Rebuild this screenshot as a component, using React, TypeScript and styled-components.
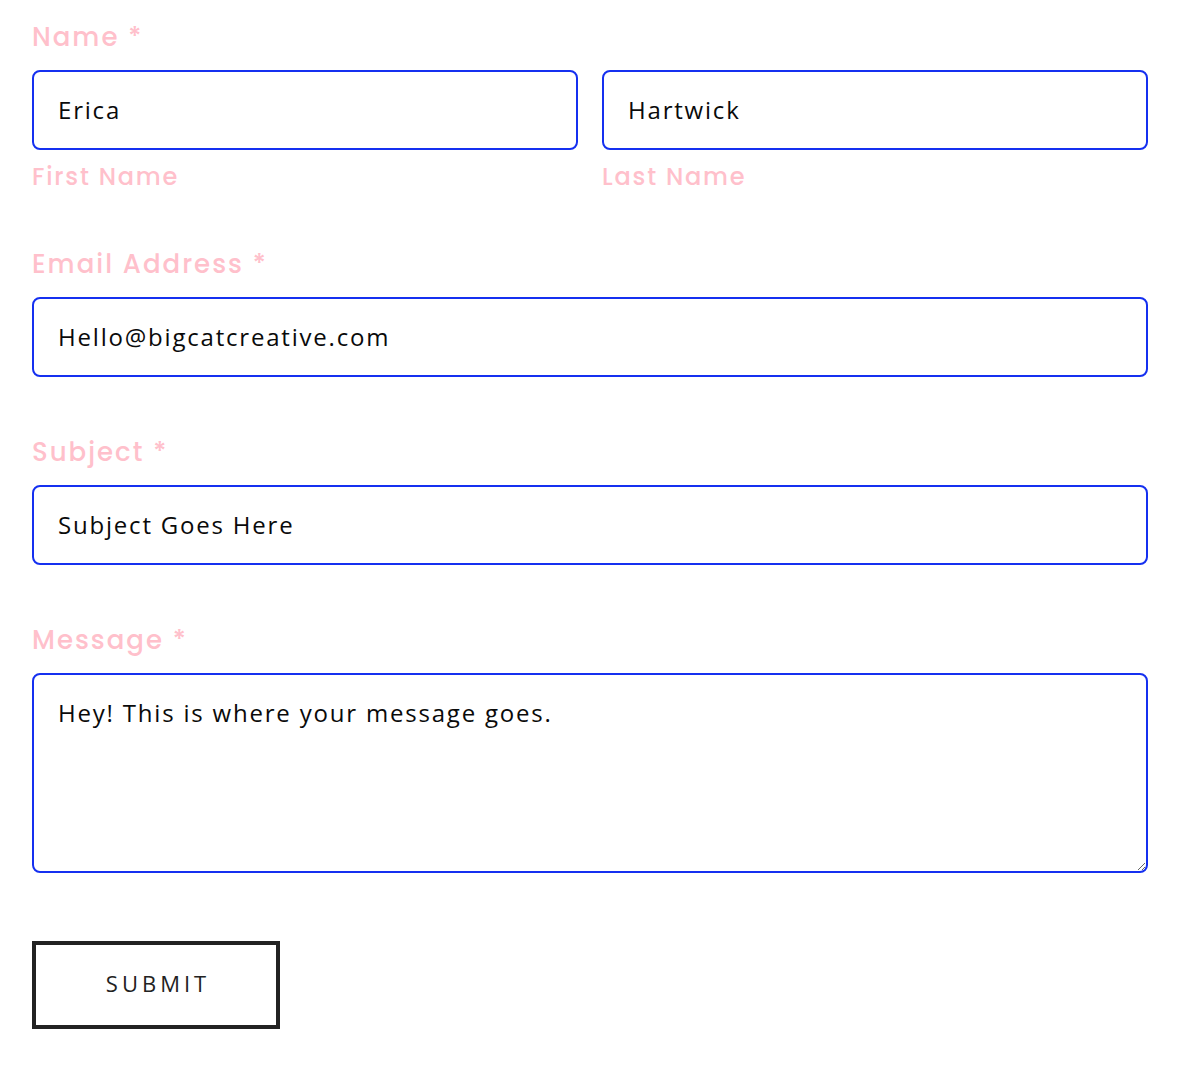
import React from "react";
import styled, { createGlobalStyle } from "styled-components";

const GlobalStyle = createGlobalStyle`
  body {
    margin: 0;
    background: #ffffff;
  }
`;

const labelFont = `"Poppins", "Noto Sans", "Open Sans", sans-serif`;
const inputFont = `"Open Sans", "Liberation Sans", sans-serif`;

export default function App() {
  return (
    <>
      <GlobalStyle />
      <Form onSubmit={(e) => e.preventDefault()}>
        <Field>
          <Label>Name *</Label>
          <Row>
            <Column>
              <Input defaultValue="Erica" />
              <SubLabel>First Name</SubLabel>
            </Column>
            <Column>
              <Input defaultValue="Hartwick" />
              <SubLabel>Last Name</SubLabel>
            </Column>
          </Row>
        </Field>

        <Field>
          <Label>Email Address *</Label>
          <Input defaultValue="Hello@bigcatcreative.com" />
        </Field>

        <Field>
          <Label>Subject *</Label>
          <Input defaultValue="Subject Goes Here" />
        </Field>

        <Field>
          <Label>Message *</Label>
          <TextArea defaultValue="Hey! This is where your message goes." />
        </Field>

        <SubmitButton type="submit">Submit</SubmitButton>
      </Form>
    </>
  );
}

const Form = styled.form`
  display: flex;
  flex-direction: column;
  align-items: flex-start;
  width: 1116px;
  padding: 20px 0 0 32px;
`;

const Field = styled.div`
  display: flex;
  flex-direction: column;
  width: 100%;
  margin-bottom: 58px;

  &:first-child {
    margin-bottom: 56px;
  }
`;

const Label = styled.label`
  height: 32px;
  margin-bottom: 18px;
  font-family: ${labelFont};
  font-size: 26px;
  line-height: 34px;
  letter-spacing: 2px;
  font-weight: 500;
  color: #ffc0cb;
`;

const Row = styled.div`
  display: grid;
  grid-template-columns: 1fr 1fr;
  column-gap: 24px;
`;

const Column = styled.div`
  display: flex;
  flex-direction: column;
`;

const SubLabel = styled.span`
  margin-top: 13px;
  height: 28px;
  font-family: ${labelFont};
  font-size: 24px;
  line-height: 28px;
  letter-spacing: 1.8px;
  font-weight: 500;
  color: #ffc0cb;
`;

const Input = styled.input`
  box-sizing: border-box;
  width: 100%;
  height: 80px;
  padding: 0 24px 1px;
  border: 2px solid #1530f0;
  border-radius: 8px;
  background: #ffffff;
  font-family: ${inputFont};
  font-size: 24px;
  font-weight: 400;
  letter-spacing: 1.8px;
  color: #0a0a0a;
  outline: none;
`;

const TextArea = styled.textarea`
  box-sizing: border-box;
  width: 100%;
  height: 200px;
  padding: 20px 24px;
  border: 2px solid #1530f0;
  border-radius: 8px;
  background: #ffffff;
  font-family: ${inputFont};
  font-size: 24px;
  font-weight: 400;
  line-height: 36px;
  letter-spacing: 1.8px;
  color: #0a0a0a;
  outline: none;
  resize: vertical;
`;

const SubmitButton = styled.button`
  box-sizing: border-box;
  width: 248px;
  height: 88px;
  margin-top: 10px;
  padding: 0 0 5px 4px;
  border: 4px solid #222222;
  background: #ffffff;
  font-family: ${inputFont};
  font-size: 22px;
  font-weight: 400;
  letter-spacing: 4px;
  text-transform: uppercase;
  color: #222222;
  cursor: pointer;
`;
